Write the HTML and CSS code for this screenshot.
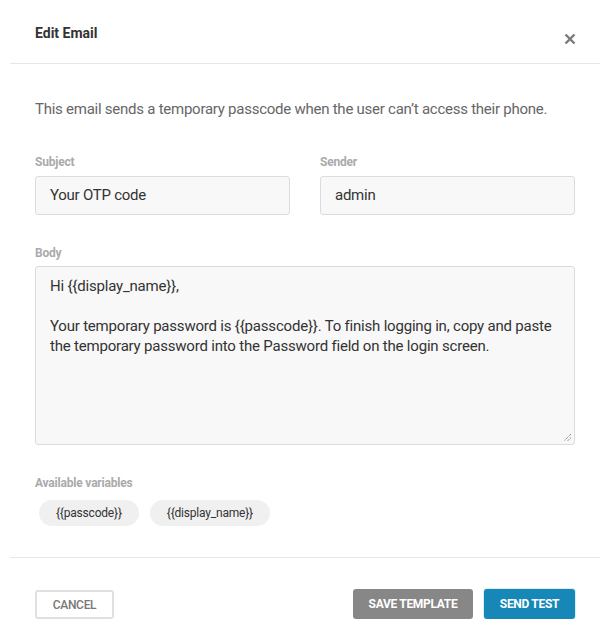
FILE: index.html
```html
<!DOCTYPE html>
<html>
<head>
<meta charset="utf-8">
<link rel="stylesheet" href="styles.css">
</head>
<body>
<div class="modal">
  <div class="modal-header">
    <h2 class="modal-title">Edit Email</h2>
    <button class="close-btn" aria-label="Close">
      <svg width="12" height="12" viewBox="0 0 12 12"><path d="M1.5 1.5 L10.5 10.5 M10.5 1.5 L1.5 10.5" stroke="#7a7a7a" stroke-width="2.4" stroke-linecap="butt"/></svg>
    </button>
  </div>
  <div class="modal-body">
    <p class="desc">This email sends a temporary passcode when the user can’t access their phone.</p>
    <div class="row">
      <div class="field">
        <label class="label">Subject</label>
        <div class="input">Your OTP code</div>
      </div>
      <div class="field">
        <label class="label">Sender</label>
        <div class="input">admin</div>
      </div>
    </div>
    <div class="field body-field">
      <label class="label">Body</label>
      <div class="textarea">
        <div>Hi {{display_name}},</div>
        <div>&nbsp;</div>
        <div>Your temporary password is {{passcode}}. To finish logging in, copy and paste the temporary password into the Password field on the login screen.</div>
        <svg class="grip" width="9" height="9" viewBox="0 0 9 9"><path d="M8 1 L1 8 M8 4.5 L4.5 8" stroke="#666" stroke-width="1" stroke-dasharray="1 1"/></svg>
      </div>
    </div>
    <div class="vars">
      <label class="label">Available variables</label>
      <div class="chips">
        <span class="chip">{{passcode}}</span>
        <span class="chip">{{display_name}}</span>
      </div>
    </div>
  </div>
  <div class="modal-footer">
    <button class="btn btn-cancel">CANCEL</button>
    <div class="footer-right">
      <button class="btn btn-save">SAVE TEMPLATE</button>
      <button class="btn btn-send">SEND TEST</button>
    </div>
  </div>
</div>
</body>
</html>
```

FILE: styles.css
```css
* { box-sizing: border-box; }
html, body { margin: 0; padding: 0; background: #fff; }
body { font-family: Roboto, "Noto Sans", Arial, sans-serif; color: #333; }

.modal {
  margin: 0 10px;
  width: 590px;
}

.modal-header {
  display: flex;
  justify-content: space-between;
  align-items: flex-start;
  height: 64px;
  padding: 25px 25px 0;
  border-bottom: 1px solid #e6e6e6;
}
.modal-title {
  margin: 0;
  font-size: 14px;
  line-height: 16px;
  font-weight: 700;
  color: #333;
}
.close-btn {
  border: 0;
  background: none;
  padding: 0;
  margin-top: 8px;
  margin-right: -1px;
  width: 12px;
  height: 12px;
  display: flex;
}

.modal-body {
  padding: 35px 25px 0;
}
.desc {
  margin: 0;
  font-size: 15px;
  line-height: 20px;
  color: #666;
  letter-spacing: -0.25px;
}

.row {
  display: flex;
  gap: 30px;
  margin-top: 36px;
}
.row .field { flex: 1; }

.label {
  display: block;
  font-size: 12px;
  line-height: 14px;
  font-weight: 700;
  color: #aaa;
  margin-bottom: 7px;
  letter-spacing: -0.2px;
}

.input {
  height: 39px;
  border: 1px solid #dcdcdc;
  border-radius: 3px;
  background: #f8f8f8;
  padding: 0 14px;
  font-size: 15px;
  line-height: 37px;
  color: #333;
  letter-spacing: -0.25px;
}

.body-field { margin-top: 31px; }
.body-field .label { margin-bottom: 6px; }
.textarea {
  position: relative;
  height: 179px;
  border: 1px solid #dcdcdc;
  border-radius: 3px;
  background: #f8f8f8;
  padding: 9px 14px;
  font-size: 15px;
  line-height: 20px;
  color: #333;
  letter-spacing: -0.2px;
}
.grip {
  position: absolute;
  right: 2px;
  bottom: 2px;
}

.vars { margin-top: 31px; }
.vars .label { margin-bottom: 10px; }
.chips {
  display: flex;
  gap: 11px;
  padding-left: 4px;
}
.chip {
  display: inline-block;
  height: 26px;
  line-height: 26px;
  padding: 0 17px;
  border-radius: 13px;
  background: #f0f0f0;
  font-size: 12px;
  color: #333;
  letter-spacing: -0.2px;
}

.modal-footer {
  margin-top: 31px;
  border-top: 1px solid #e6e6e6;
  padding: 30px 25px 0;
  display: flex;
  justify-content: space-between;
  align-items: center;
}
.footer-right {
  display: flex;
  gap: 11px;
}
.btn {
  font-family: Roboto, "Noto Sans", Arial, sans-serif;
  font-size: 12px;
  font-weight: 700;
  height: 30px;
  border-radius: 3px;
  padding: 0;
  white-space: nowrap;
  letter-spacing: -0.3px;
  cursor: pointer;
}
.btn-cancel {
  background: #fff;
  border: 2px solid #e0e0e0;
  color: #777;
  font-weight: 500;
  width: 79px;
  height: 29px;
  margin-top: 2px;
}
.btn-save {
  background: #878787;
  border: 0;
  color: #fff;
  width: 120px;
}
.btn-send {
  background: #1787b8;
  border: 0;
  color: #fff;
  width: 91px;
  box-shadow: 0 0 0 1px #d8eefa;
}
```
